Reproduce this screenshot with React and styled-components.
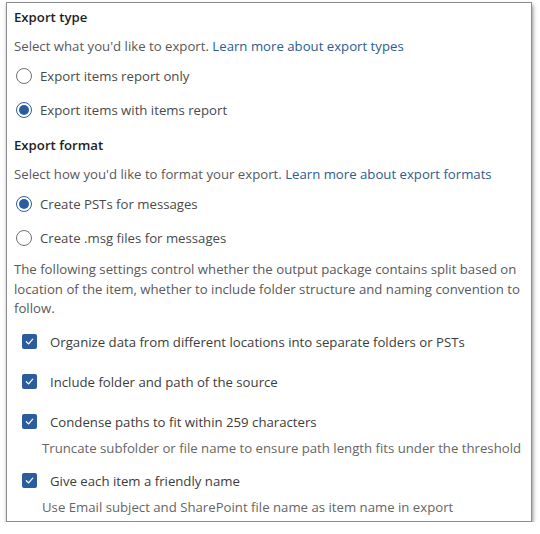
import React from "react"
import styled, { createGlobalStyle } from "styled-components"

const GlobalStyle = createGlobalStyle`
  html, body {
    margin: 0;
    padding: 0;
    background: #fff;
  }
  body {
    font-family: "Open Sans", "Noto Sans", sans-serif;
    font-size: 13.2px;
    color: #444;
  }
`

const Frame = styled.div`
  margin: 2px 0 0 6px;
  width: 526px;
  height: 520px;
  border: 1px solid #8c8c8c;
  box-shadow: 1px 3px 4px rgba(0, 0, 0, 0.45);
  padding: 4px 7px 0 7px;
  box-sizing: border-box;
  background: #fff;
`

const Heading = styled.div`
  height: 20px;
  line-height: 20px;
  font-weight: 600;
  color: #1f1f1f;
  margin-top: ${(p) => (p.$first ? "0" : "8px")};
`

const Desc = styled.div`
  height: 20px;
  line-height: 20px;
  margin-top: 9px;
  color: #595959;
`

const Link = styled.a`
  color: #2c5d8f;
  text-decoration: none;
`

const RadioGroup = styled.div`
  margin-top: 3px;
`

const RadioRow = styled.div`
  height: 34px;
  display: flex;
  align-items: center;
  gap: 8px;
  padding-left: 2px;
  color: #4a4a4a;
`

const Circle = styled.span`
  width: 16px;
  height: 16px;
  border-radius: 50%;
  border: 1px solid;
  box-sizing: border-box;
  display: flex;
  align-items: center;
  justify-content: center;
  flex: none;
  border-color: ${(p) => (p.$on ? "#2b5d9e" : "#707070")};
  &::after {
    content: "";
    display: ${(p) => (p.$on ? "block" : "none")};
    width: 10px;
    height: 10px;
    border-radius: 50%;
    background: #2b5d9e;
  }
`

const Para = styled.p`
  margin: 5px 0 0;
  line-height: 19.5px;
  color: #595959;
`

const CheckList = styled.div`
  margin-top: 13px;
  display: flex;
  flex-direction: column;
`

const CheckItem = styled.div`
  margin-top: ${(p) => (p.$first ? "0" : p.$afterDesc ? "13px" : "20px")};
`

const CheckRow = styled.div`
  height: 20px;
  display: flex;
  align-items: center;
  padding-left: 8px;
  gap: 13px;
  color: #3c3c3c;
`

const Box = styled.span`
  width: 15px;
  height: 15px;
  border-radius: 2px;
  background: #2b5d9e;
  display: flex;
  align-items: center;
  justify-content: center;
  flex: none;
`

const Hint = styled.div`
  height: 20px;
  line-height: 20px;
  margin-top: 6px;
  padding-left: 28px;
  color: #666;
`

const Tick = () => (
  <svg width="9" height="9" viewBox="0 0 10 10">
    <path d="M1.5 5.3 L4 7.6 L8.6 2.4" fill="none" stroke="#fff" strokeWidth="1.4" strokeLinecap="round" strokeLinejoin="round" />
  </svg>
)

const checks = [
  ["Organize data from different locations into separate folders or PSTs"],
  ["Include folder and path of the source"],
  ["Condense paths to fit within 259 characters", "Truncate subfolder or file name to ensure path length fits under the threshold"],
  ["Give each item a friendly name", "Use Email subject and SharePoint file name as item name in export"],
]

export default function App() {
  return (
    <>
      <GlobalStyle />
      <Frame>
        <Heading $first>Export type</Heading>
        <Desc>
          Select what you'd like to export. <Link href="#">Learn more about export types</Link>
        </Desc>
        <RadioGroup>
          <RadioRow><Circle />Export items report only</RadioRow>
          <RadioRow><Circle $on />Export items with items report</RadioRow>
        </RadioGroup>

        <Heading>Export format</Heading>
        <Desc>
          Select how you'd like to format your export. <Link href="#">Learn more about export formats</Link>
        </Desc>
        <RadioGroup>
          <RadioRow><Circle $on />Create PSTs for messages</RadioRow>
          <RadioRow><Circle />Create .msg files for messages</RadioRow>
        </RadioGroup>

        <Para>
          The following settings control whether the output package contains split based on location of the item, whether to include folder structure and naming convention to follow.
        </Para>

        <CheckList>
          {checks.map(([label, hint], i) => (
            <CheckItem key={label} $first={i === 0} $afterDesc={i > 0 && !!checks[i - 1][1]}>
              <CheckRow><Box><Tick /></Box>{label}</CheckRow>
              {hint && <Hint>{hint}</Hint>}
            </CheckItem>
          ))}
        </CheckList>
      </Frame>
    </>
  )
}
